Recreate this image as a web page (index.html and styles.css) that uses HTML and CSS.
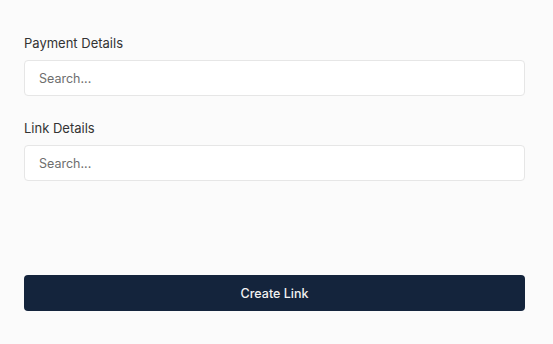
FILE: index.html
```html
<!DOCTYPE html>
<html>
<head>
<meta charset="utf-8">
<link rel="stylesheet" href="styles.css">
</head>
<body>
<div class="panel">
  <form class="form">
    <div class="field">
      <label class="label">Payment Details</label>
      <input class="input" type="text" placeholder="Search...">
    </div>
    <div class="field">
      <label class="label">Link Details</label>
      <input class="input" type="text" placeholder="Search...">
    </div>
    <button class="btn" type="button">Create Link</button>
  </form>
</div>
</body>
</html>
```
FILE: styles.css
```css
html, body {
  margin: 0;
  height: 100%;
  background: #fbfbfb;
}
body {
  font-family: Inter, "Noto Sans", sans-serif;
}
.panel {
  padding: 33px 28px 0 24px;
}
.form {
  display: flex;
  flex-direction: column;
}
.field {
  display: flex;
  flex-direction: column;
  gap: 7px;
  margin-bottom: 22px;
}
.label {
  font-size: 13px;
  line-height: 20px;
  color: #333;
  font-weight: 400;
}
.input {
  box-sizing: border-box;
  height: 36px;
  border: 1px solid #e6e6e6;
  border-radius: 4px;
  background: #fff;
  padding: 0 14px;
  font-family: inherit;
  font-size: 12.5px;
  color: #333;
  outline: none;
}
.input::placeholder {
  color: #6e6e6e;
}
.btn {
  margin-top: 72px;
  height: 36px;
  border: none;
  border-radius: 4px;
  background: #14243c;
  color: #f2f2f2;
  font-family: inherit;
  font-size: 12.5px;
  font-weight: 500;
}
```
